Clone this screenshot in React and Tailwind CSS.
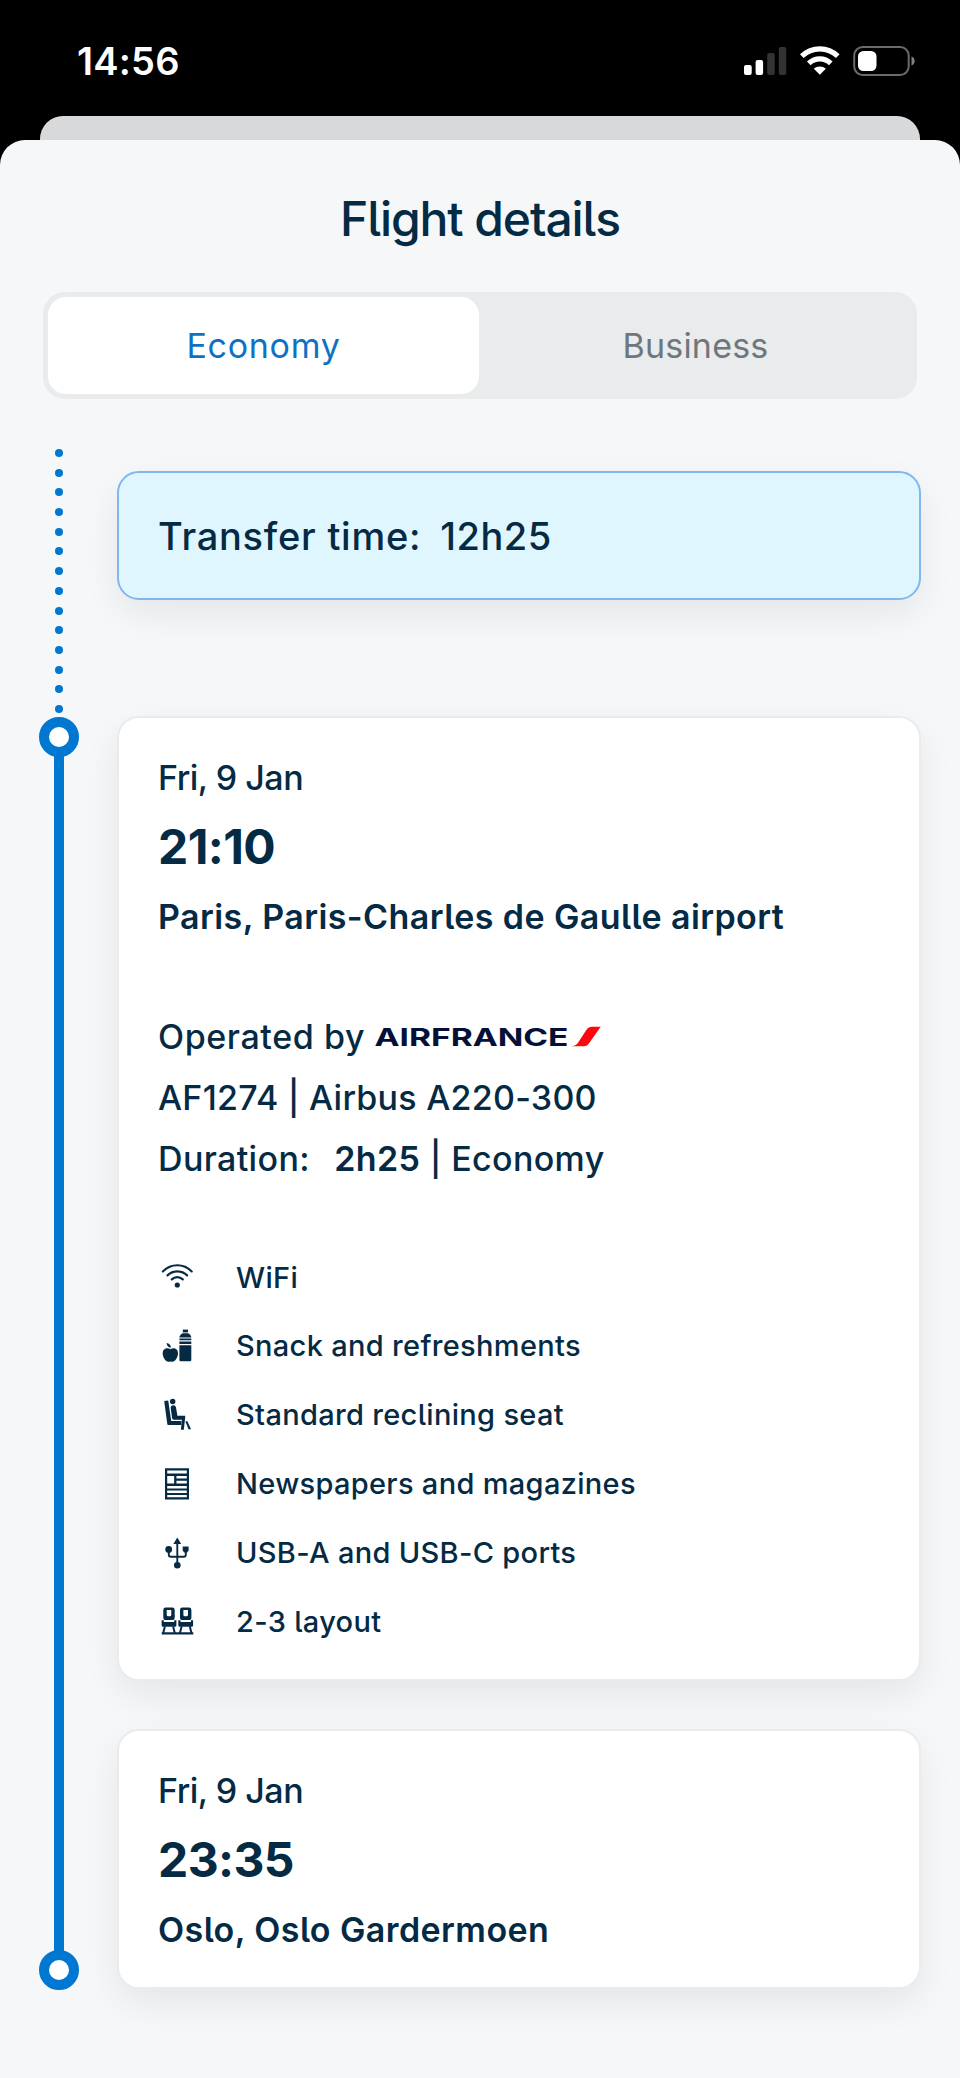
import React from 'react';

const WifiIcon = () => (
  <svg viewBox="0 0 36 36" className="w-9 h-9 flex-shrink-0" fill="none" stroke="#052a44" strokeWidth="2.2" strokeLinecap="round">
    <path d="M3.9 12.4C12 4.2 24.6 4.2 32.7 12.4" />
    <path d="M8.5 16.4C14 11 22.6 11 28.1 16.4" />
    <path d="M12.8 20.4C16 17.4 20.6 17.4 23.8 20.4" />
    <circle cx="18.3" cy="26" r="2.6" fill="#052a44" stroke="none" />
  </svg>
);

const SnackIcon = () => (
  <svg viewBox="0 0 36 36" className="w-9 h-9 flex-shrink-0" fill="#052a44">
    <path d="M23.8 1.6h5.2v2.8h-5.2z" />
    <path d="M23.6 5.3h5.6c1.7.9 2.9 2.2 3.1 4.3H20.4c.2-2.1 1.500-3.400 3.200-4.300z" />
    <path d="M20.4 10.6h11.9v1.7H20.4zM20.4 13.5h11.9v2.5H20.4z" />
    <path d="M20.4 17.3h11.9v14.7q0 1.3-1.3 1.3h-9.3q-1.3 0-1.3-1.3z" />
    <path d="M11.4 21.2c2.2-1.9 7.6-1.5 7.6 4 0 4.2-2.9 8.5-5.6 8.5-.9 0-1.3-.3-2-.3s-1.1.3-2 .3c-2.8 0-5.7-4.300-5.700-8.500 0-5.500 5.500-5.900 7.700-4z" />
    <path d="M7.600 15c2.500.2 4.300 1.900 4.300 4.800-2.600-.2-4.300-2.100-4.300-4.800z" />
  </svg>
);

const SeatIcon = () => (
  <svg viewBox="0 0 36 36" className="w-9 h-9 flex-shrink-0" fill="#052a44">
    <circle cx="13.7" cy="4.5" r="2.7" />
    <path d="M5.2 4.1l4-.6 3 20.6h10.200v4H9.700q-1.200 0-1.400-1.200z" />
    <path d="M11.7 10.8q0-2.600 2.700-2.600 2.200 0 2.600 2.200l1.400 8.300h7.800v1.700l-1.400 12.400h-2.900l1-10.100h-8.200q-1.400 0-1.600-1.400z" />
    <path d="M26.4 24.2h2l3.600 8.100h-2.500z" />
  </svg>
);

const NewspaperIcon = () => (
  <svg viewBox="0 0 36 36" className="w-9 h-9 flex-shrink-0" fill="none" stroke="#052a44">
    <path d="M7.1 3.3h21.8v29H7.1z" strokeWidth="2.2" />
    <path d="M7 8.7h22M7 18.8h22" strokeWidth="2.5" />
    <path d="M16.3 8.7v10M16.3 13.6h12.7" strokeWidth="2.3" />
    <path d="M7 23.5h22M7 28h22" strokeWidth="2.2" />
  </svg>
);

const UsbIcon = () => (
  <svg viewBox="0 0 36 36" className="w-9 h-9 flex-shrink-0" fill="#052a44">
    <path d="M18.3 2.6l3.9 6.4h-7.8z" />
    <path d="M18.3 8v22M9.8 15v4.7q0 2 2 2h13q2 0 2-2V15" fill="none" stroke="#052a44" strokeWidth="1.9" />
    <circle cx="9.7" cy="14.4" r="3.4" />
    <path d="M23.7 11.4h5.9v4l-1.5 2h-2.9l-1.5-2z" />
    <circle cx="18.3" cy="30.2" r="3.3" />
  </svg>
);

const LayoutIcon = () => (
  <svg viewBox="0 0 36 36" className="w-9 h-9 flex-shrink-0" fill="#052a44">
    {[0, 16.7].map((x) => (
      <g key={x} transform={`translate(${x} 0)`}>
        <path fillRule="evenodd" d="M6.7 4.6h6.6q2.4 0 2.4 2.4v7.5q0 2.6-2.6 2.6H6.9q-2.6 0-2.6-2.6V7q0-2.4 2.4-2.4zM7.7 7v4.8q0 1.5 1.5 1.5h1.6q1.5 0 1.5-1.5V7z" />
        <path d="M2.6 17.2h2.2v1.7h10.4V17.2h2.2v5q0 1.5-1.5 1.5H4.1q-1.5 0-1.5-1.5z" />
        <path d="M5.9 23.5L4.2 30M14.1 23.5L15.8 30" stroke="#052a44" strokeWidth="2" />
      </g>
    ))}
    <path d="M2.7 29.2h31.6v2.2H2.7z" />
  </svg>
);

const AirFranceLogo = () => (
  <svg viewBox="0 0 230 28" className="w-[230px] h-7 flex-shrink-0 overflow-visible">
    <text x="-0.5" y="22.5" textLength="194" lengthAdjust="spacingAndGlyphs" fill="#051039" fontFamily="Inter, sans-serif" fontWeight="700" fontSize="24.5">
      AIRFRANCE
    </text>
    <path d="M196 23.3c3.400-.3 5.400-1.300 7-3.600l8-12.200q2.200-3.700 6-3.700h8.700l-12 17q-1.800 2.500-4.700 2.500z" fill="#fa0a0f" />
  </svg>
);

const StatusIcons = () => (
  <svg viewBox="0 0 172 32" className="w-[172px] h-8">
    <g fill="#fff">
      <rect x="0" y="21" width="7.7" height="10" rx="2" />
      <rect x="11.6" y="16" width="7.5" height="15" rx="2" />
      <rect x="23.2" y="9" width="7.5" height="22" rx="2" opacity=".2" />
      <rect x="34.8" y="3" width="7.5" height="28" rx="2" opacity=".2" />
    </g>
    <g fill="none" stroke="#fff" strokeWidth="5.2">
      <path d="M57.8 12.2C68 2.4 83.6 2.4 93.8 12.2" />
      <path d="M64.8 19.3C71 13.4 80.6 13.4 86.8 19.3" />
    </g>
    <path d="M69.800 24.700c3.400-3.100 8.600-3.100 12 0L75.800 30.800z" fill="#fff" />
    <rect x="110.2" y="3" width="54.5" height="28" rx="8.5" fill="none" stroke="#fff" strokeOpacity=".42" strokeWidth="2" />
    <rect x="114" y="7" width="18.5" height="20" rx="5.5" fill="#fff" />
    <path d="M167.5 12.5c4.2 1.5 4.2 7.5 0 9z" fill="#fff" opacity=".5" />
  </svg>
);

const features = [
  { icon: WifiIcon, label: 'WiFi' },
  { icon: SnackIcon, label: 'Snack and refreshments' },
  { icon: SeatIcon, label: 'Standard reclining seat' },
  { icon: NewspaperIcon, label: 'Newspapers and magazines' },
  { icon: UsbIcon, label: 'USB-A and USB-C ports' },
  { icon: LayoutIcon, label: '2-3 layout' },
];

const Card = ({ className, children }) => (
  <div className={`w-[804px] rounded-[22px] border-2 border-[#e9ebed] bg-white pl-[39px] pt-[30px] shadow-[0_14px_36px_rgba(0,0,0,0.07)] ${className}`}>
    {children}
  </div>
);

const Stop = ({ date, time, place }) => (
  <>
    <p className="text-[34px] leading-[60px] tracking-[-0.5px]">{date}</p>
    <p className="text-[48px] leading-[78px] font-bold tracking-[-0.6px] [font-feature-settings:'calt'_0]">{time}</p>
    <p className="text-[34px] leading-[62px] font-semibold tracking-[0.42px]">{place}</p>
  </>
);

const Node = () => (
  <div className="w-10 h-10 rounded-full border-[10px] border-[#0077d0] bg-white flex-shrink-0"></div>
);

// Dotted transfer line, then the solid flight line between two stops
const Timeline = () => (
  <div className="w-10 flex flex-col items-center">
    <div className="flex flex-col gap-[11.7px] pb-1">
      {Array.from({ length: 14 }, (_, i) => (
        <span key={i} className="w-2 h-2 rounded-full bg-[#0077d0]"></span>
      ))}
    </div>
    <Node />
    <div className="w-2.5 h-[1195px] -my-px bg-[#0077d0]"></div>
    <Node />
  </div>
);

const App = () => {
  return (
    <div className="w-[960px] h-[2078px] overflow-hidden bg-black flex flex-col text-[#052a44] font-['Inter',sans-serif] font-medium [font-feature-settings:'cv05'] whitespace-nowrap">
      {/* Status bar */}
      <div className="h-[116px] flex-shrink-0 flex justify-between items-start pl-[77px] pr-11 pt-11">
        <span className="text-white text-[38px] leading-[35px] font-semibold tracking-[0.2px]">14:56</span>
        <StatusIcons />
      </div>

      {/* Sheet underneath */}
      <div className="mx-10 h-6 flex-shrink-0 rounded-t-[23px] bg-[#d7d9db]"></div>

      <div className="flex-1 rounded-t-[25px] bg-[#f5f7f9]">
        <h1 className="pt-12 text-center text-[48px] leading-[62px] tracking-[-1.1px]">Flight details</h1>

        {/* Cabin tabs */}
        <div className="mt-[42px] ml-[43px] w-[874px] h-[107px] rounded-[22px] bg-[#e9ebec] p-[5px] flex text-[34px] font-normal">
          <div className="w-[431px] rounded-[18px] bg-white flex items-center justify-center text-[#0d72c4] tracking-[0.7px]">Economy</div>
          <div className="flex-1 flex items-center justify-center text-[#6e777d] tracking-[0.2px]">Business</div>
        </div>

        <div className="flex mt-[50px] pl-[39px]">
          <Timeline />

          <div className="ml-[38px] pt-[22px]">
            <div className="w-[804px] h-[129px] rounded-[22px] border-2 border-[#7fb8ef] bg-[#e0f6ff] pl-[39px] pt-px flex items-center text-[38px] shadow-[0_14px_36px_rgba(0,0,0,0.07)]">
              <span className="tracking-[0.75px]">Transfer time:</span>
              <span className="ml-[19px] tracking-[0.5px]">12h25</span>
            </div>

            <Card className="mt-[116px] h-[965px]">
              <Stop date="Fri, 9 Jan" time="21:10" place="Paris, Paris-Charles de Gaulle airport" />

              <div className="mt-[58px] text-[34px] leading-[61px]">
                <div className="flex items-center h-[61px]">
                  <span className="mr-2.5 tracking-[0.6px]">Operated by</span>
                  <AirFranceLogo />
                </div>
                <p className="tracking-[0.25px]">AF1274 | Airbus A220-300</p>
                <p className="tracking-[0.35px]">
                  Duration: <span className="ml-[15px] font-semibold">2h25</span> | Economy
                </p>
              </div>

              <div className="mt-[54px]">
                {features.map(({ icon: Icon, label }) => (
                  <div key={label} className="h-[68.8px] pl-px flex items-center gap-[41px] text-[29px] tracking-[0.32px]">
                    <Icon />
                    <span>{label}</span>
                  </div>
                ))}
              </div>
            </Card>

            <Card className="mt-12 h-[260px]">
              <Stop date="Fri, 9 Jan" time="23:35" place="Oslo, Oslo Gardermoen" />
            </Card>
          </div>
        </div>
      </div>
    </div>
  );
};

export default App;
